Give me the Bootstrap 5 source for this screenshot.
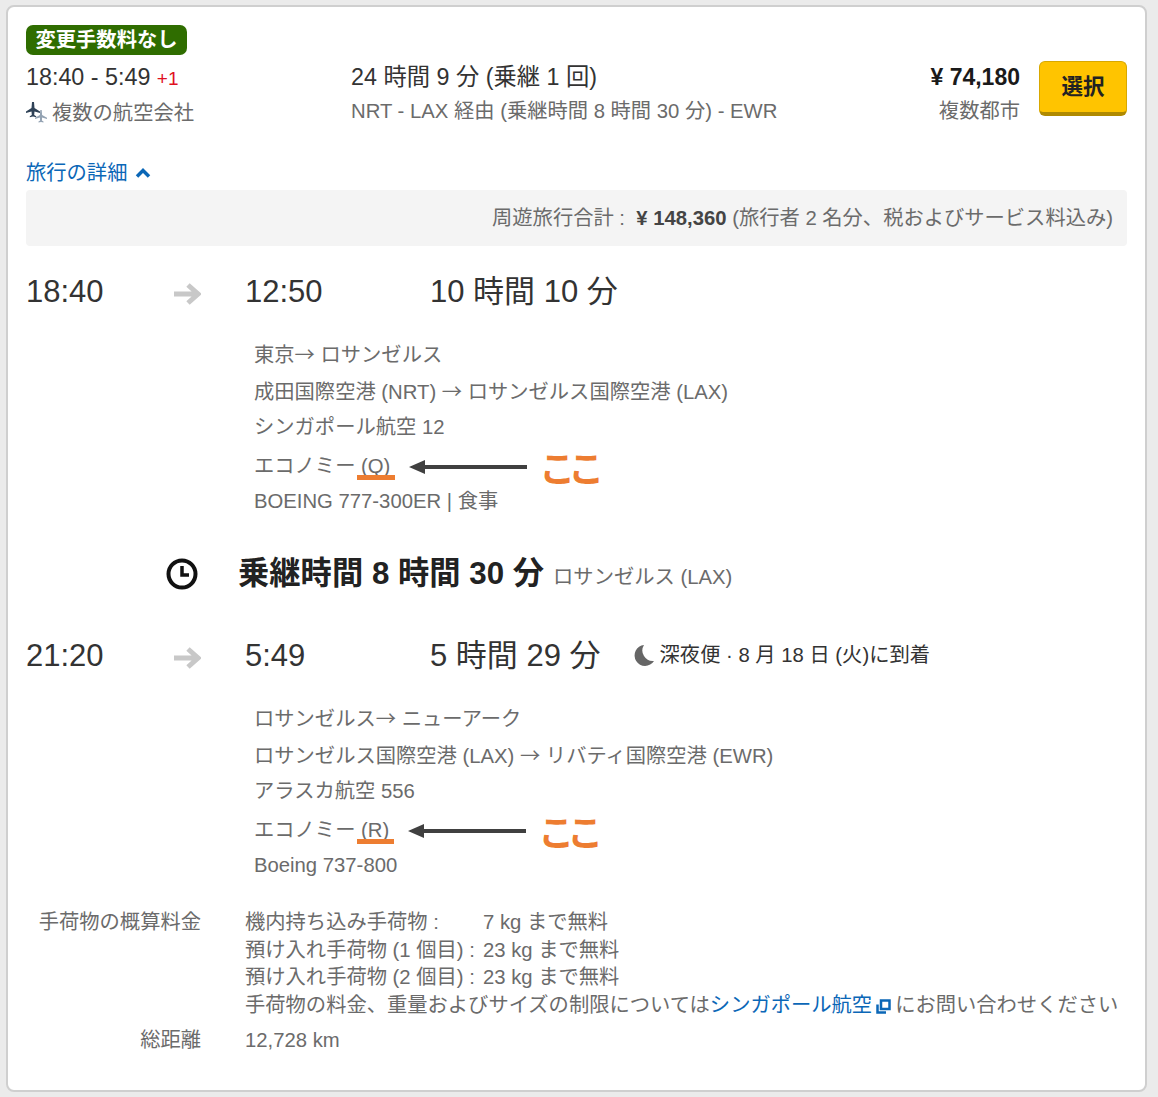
<!DOCTYPE html>
<html lang="ja">

<head>
    <meta charset="UTF-8">
    <meta name="viewport" content="width=device-width, initial-scale=1.0">
    <title>Flight details</title>
    <link href="https://cdn.jsdelivr.net/npm/bootstrap@5.3.3/dist/css/bootstrap.min.css" rel="stylesheet">
    <style>
        body {
            background: #ebebeb;
            font-family: "Liberation Sans", "Noto Sans CJK JP", sans-serif;
            font-size: 20.3px;
            color: #6b6b6b;
        }

        .flight-card {
            width: 1141px;
            height: 1087px;
            margin: 5px 0 0 6px;
            padding: 18px 18px 0 18px;
            background: #fff;
            border: 2px solid #cfcfcf;
            border-radius: 8px;
        }

        .fee-tag {
            width: 161px;
            height: 30px;
            line-height: 30px;
            background: #2f6d00;
            color: #fff;
            font-weight: 700;
            font-size: 20.3px;
            text-align: center;
            border-radius: 7px;
        }

        .summary {
            margin-top: 6px;
            height: 62px;
        }

        .col-times { width: 325px; flex-shrink: 0; }
        .col-route { width: 515px; flex-shrink: 0; }
        .col-price { width: 154px; flex-shrink: 0; text-align: right; }

        .main-line {
            font-size: 23.3px;
            line-height: 32px;
            color: #333;
            white-space: nowrap;
        }

        .sub-line {
            line-height: 36px;
            white-space: nowrap;
        }

        .plus-day {
            color: #e0101f;
            font-size: 19px;
        }

        .price {
            font-size: 23px;
            font-weight: 700;
            line-height: 32px;
            color: #1a1a1a;
        }

        .select-btn {
            width: 88px;
            height: 55px;
            margin-left: 19px;
            padding: 0;
            flex-shrink: 0;
            background: #ffc400;
            border: 1px solid #d8a800;
            border-bottom: 4px solid #b08a00;
            border-radius: 6px;
            color: #222;
            font-size: 21.5px;
            font-weight: 700;
        }

        .detail-link {
            margin-top: 33px;
            line-height: 34px;
            color: #0b67b7;
        }

        .total-bar {
            height: 56px;
            padding-right: 14px;
            background: #f4f4f4;
            border-radius: 4px;
        }

        .total-bar b { color: #444; }

        .time-row {
            height: 44px;
            line-height: 44px;
            color: #333;
            font-size: 31px;
            white-space: nowrap;
        }

        .second-row { margin-top: 38px; }
        .w-depart { width: 147px; }
        .w-arrive { width: 185px; }
        .row-arrow { margin-right: 44px; margin-top: 4px; }

        .leg-lines {
            padding-left: 228px;
            margin-top: 21px;
        }

        .leg-line {
            height: 37px;
            line-height: 37px;
            white-space: nowrap;
        }

        .cabin-line { padding-top: 4px; }

        .cjk-arrow {
            font-family: "Noto Sans CJK JP", sans-serif;
        }

        .cabin-code {
            position: relative;
        }

        .cabin-code::after {
            content: "";
            position: absolute;
            left: -4px;
            right: -5px;
            bottom: -3px;
            height: 5px;
            background: #ed7d31;
        }

        .here-arrow {
            margin-left: 19px;
            margin-right: 12px;
        }

        .here-text {
            color: #ed7d31;
            font-family: "Noto Sans CJK JP", sans-serif;
            font-size: 36px;
            font-weight: 700;
            line-height: 37px;
            letter-spacing: -7px;
        }

        .layover {
            height: 44px;
            margin-top: 32px;
            white-space: nowrap;
        }

        .clock-icon { margin-left: 140px; }

        .layover-time {
            color: #222;
            font-size: 31.3px;
            font-weight: 700;
            margin-left: 40px;
            margin-right: 9px;
        }

        .layover-place { margin-top: 6px; }
        .moon-note { font-size: 20.3px; margin-left: 33px; margin-top: -2px; }

        .baggage {
            margin-top: 25px;
            line-height: 27.5px;
            white-space: nowrap;
        }

        .bag-label {
            width: 175px;
            margin-right: 44px;
            text-align: right;
        }

        .bag-name { width: 238px; }
        .link-blue { color: #0b67b7; }
    </style>
</head>

<body>
    <div class="flight-card">
        <div class="fee-tag">変更手数料なし</div>

        <div class="summary d-flex">
            <div class="col-times">
                <div class="main-line">18:40 - 5:49 <span class="plus-day">+1</span></div>
                <div class="sub-line d-flex align-items-center" style="gap:5px">
                    <svg width="21" height="22" viewBox="0 0 21 22">
                        <path d="M6 0h2l.5 6 5.500 3.500V11L8.500 9.500 8.200 13l2 1.200v1L7 14.500l-3.200.7v-1l2-1.200-.3-3.500L0 11V9.500L5.500 6z" fill="#2f4257"/>
                        <path d="M14.300 8h1.400l.4 5 4.900 2.700v1.200l-4.900-1.300-.2 3 1.600 1v.9l-2.500-.6-2.500.6v-.9l1.600-1-.2-3-4.900 1.300v-1.200l4.900-2.700z" fill="#94a3b3"/>
                    </svg>
                    複数の航空会社
                </div>
            </div>
            <div class="col-route">
                <div class="main-line">24 時間 9 分 (乗継 1 回)</div>
                <div class="sub-line">NRT - LAX 経由 (乗継時間 8 時間 30 分) - EWR</div>
            </div>
            <div class="col-price">
                <div class="price">¥ 74,180</div>
                <div class="sub-line">複数都市</div>
            </div>
            <button class="btn select-btn" type="button">選択</button>
        </div>

        <div class="detail-link d-flex align-items-center gap-2">
            旅行の詳細
            <svg width="16" height="10" viewBox="0 0 16 10"><path d="M2 8.500l6-6 6 6" fill="none" stroke="#0b67b7" stroke-width="3.500"/></svg>
        </div>

        <div class="total-bar d-flex align-items-center justify-content-end">
            <span>周遊旅行合計 :&nbsp; <b>¥ 148,360</b> (旅行者 2 名分、税およびサービス料込み)</span>
        </div>

        <div class="time-row d-flex align-items-center mt-4">
            <div class="w-depart">18:40</div>
            <svg class="row-arrow" width="28" height="24" viewBox="0 0 28 24"><path d="M1 12h24M15 3l10 9-10 9" fill="none" stroke="#c8c8c8" stroke-width="5"/></svg>
            <div class="w-arrive">12:50</div>
            <div>10 時間 10 分</div>
        </div>

        <div class="leg-lines">
            <div class="leg-line">東京<span class="cjk-arrow">→</span> ロサンゼルス</div>
            <div class="leg-line">成田国際空港 (NRT) <span class="cjk-arrow">→</span> ロサンゼルス国際空港 (LAX)</div>
            <div class="leg-line">シンガポール航空 12</div>
            <div class="leg-line cabin-line d-flex align-items-center">
                <span>エコノミー <span class="cabin-code">(Q)</span></span>
                <svg class="here-arrow" width="118" height="14" viewBox="0 0 118 14"><path d="M0 7l16-7v5h102v4H16v5z" fill="#404040"/></svg>
                <span class="here-text">ここ</span>
            </div>
            <div class="leg-line">BOEING 777-300ER | 食事</div>
        </div>

        <div class="layover d-flex align-items-center">
            <svg class="clock-icon" width="32" height="32" viewBox="0 0 32 32">
                <circle cx="16" cy="16" r="13.500" fill="none" stroke="#111" stroke-width="4"/>
                <path d="M16 8v9h7" fill="none" stroke="#111" stroke-width="3.500"/>
            </svg>
            <span class="layover-time">乗継時間 8 時間 30 分</span>
            <span class="layover-place">ロサンゼルス (LAX)</span>
        </div>

        <div class="time-row second-row d-flex align-items-center">
            <div class="w-depart">21:20</div>
            <svg class="row-arrow" width="28" height="24" viewBox="0 0 28 24"><path d="M1 12h24M15 3l10 9-10 9" fill="none" stroke="#c8c8c8" stroke-width="5"/></svg>
            <div class="w-arrive">5:49</div>
            <div>5 時間 29 分</div>
            <div class="moon-note sub-line d-flex align-items-center" style="gap:6px">
                <svg width="20" height="22" viewBox="0 0 20 22"><path d="M10 1A10.500 10.500 0 1 0 20 17A10.500 10.500 0 0 1 10 1z" fill="#666"/></svg>
                深夜便 · 8 月 18 日 (火)に到着
            </div>
        </div>

        <div class="leg-lines">
            <div class="leg-line">ロサンゼルス<span class="cjk-arrow">→</span> ニューアーク</div>
            <div class="leg-line">ロサンゼルス国際空港 (LAX) <span class="cjk-arrow">→</span> リバティ国際空港 (EWR)</div>
            <div class="leg-line">アラスカ航空 556</div>
            <div class="leg-line cabin-line d-flex align-items-center">
                <span>エコノミー <span class="cabin-code">(R)</span></span>
                <svg class="here-arrow" width="118" height="14" viewBox="0 0 118 14"><path d="M0 7l16-7v5h102v4H16v5z" fill="#404040"/></svg>
                <span class="here-text">ここ</span>
            </div>
            <div class="leg-line">Boeing 737-800</div>
        </div>

        <div class="baggage d-flex">
            <div class="bag-label">手荷物の概算料金</div>
            <div>
                <div class="d-flex"><div class="bag-name">機内持ち込み手荷物 :</div><div>7 kg まで無料</div></div>
                <div class="d-flex"><div class="bag-name">預け入れ手荷物 (1 個目) :</div><div>23 kg まで無料</div></div>
                <div class="d-flex"><div class="bag-name">預け入れ手荷物 (2 個目) :</div><div>23 kg まで無料</div></div>
                <div>手荷物の料金、重量およびサイズの制限については<span class="link-blue">シンガポール航空</span><svg class="mx-1" width="15" height="15" viewBox="0 0 15 15"><path d="M5 1.500h8.500V10H5zM1.500 5.500v8H10" fill="none" stroke="#0b67b7" stroke-width="2.500"/></svg>にお問い合わせください</div>
            </div>
        </div>
        <div class="baggage d-flex mt-2">
            <div class="bag-label">総距離</div>
            <div>12,728 km</div>
        </div>
    </div>

    <script src="https://cdn.jsdelivr.net/npm/bootstrap@5.3.3/dist/js/bootstrap.bundle.min.js"></script>
</body>

</html>
